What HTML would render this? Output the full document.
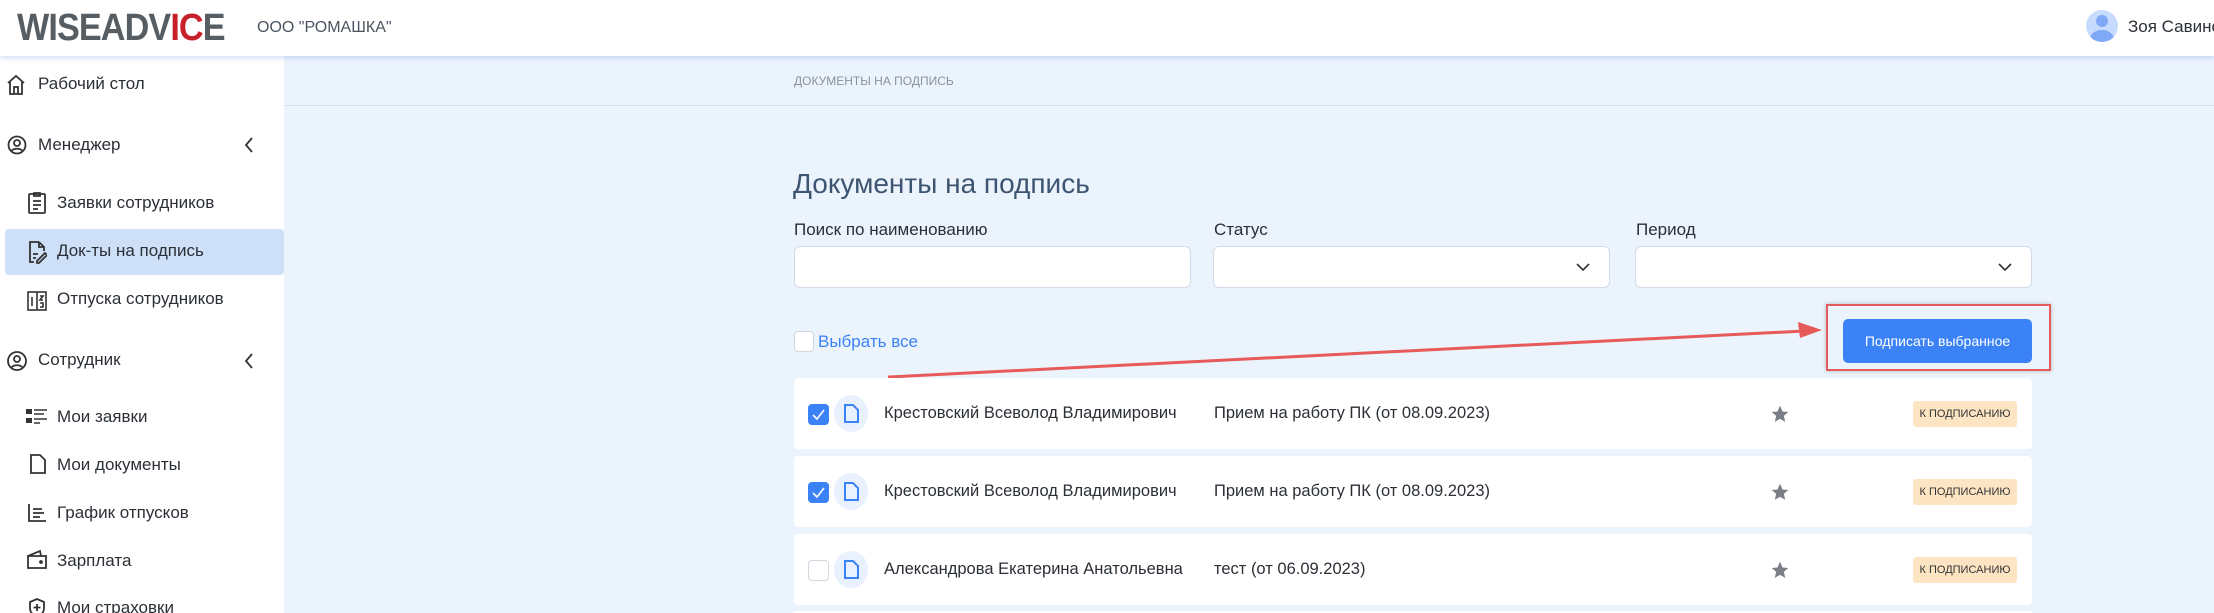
<!DOCTYPE html>
<html style="width:2214px;height:613px;overflow:hidden"><head><meta charset="utf-8"><style>
*{box-sizing:border-box;margin:0;padding:0}
body{width:2214px;height:613px;overflow:hidden;background:#ebf3fd;font-family:"Liberation Sans",sans-serif;color:#2b2f36;position:relative}
.a{position:absolute;white-space:nowrap}
#hdr{position:absolute;left:0;top:0;width:2214px;height:56px;background:#fff;box-shadow:0 2px 5px rgba(120,160,230,.35);z-index:3}
#side{position:absolute;left:0;top:56px;width:284px;height:557px;background:#fff;z-index:2}
.it{position:absolute;left:0;font-size:17px;color:#2b2f36}
.ic{position:absolute}
.inp{position:absolute;top:246px;height:42px;background:#fff;border:1px solid #d3dbe6;border-radius:6px}
.lbl{position:absolute;top:220px;font-size:17px;color:#2b2f36}
.row{position:absolute;left:794px;width:1238px;height:71px;background:#fff;border-radius:4px}
.cb{position:absolute;left:14px;top:26px;width:21px;height:21px;border-radius:4px}
.cb.on{background:#3b82f6}
.cb.off{border:1.5px solid #cfd6df;background:#fff}
.dc{position:absolute;left:40px;top:17px;width:34px;height:37px;border-radius:50%;background:#e8f1fd}
.nm{position:absolute;left:90px;top:26px;font-size:16.5px}
.dn{position:absolute;left:420px;top:26px;font-size:16.5px}
.st{position:absolute;left:976px;top:26px}
.bd{position:absolute;left:1119px;top:23px;width:104px;height:26px;background:#fde5c4;border-radius:3px;font-size:11px;text-align:center;line-height:26px;color:#333}
</style></head><body>
<div id="hdr">
 <div class="a" style="left:17px;top:7px;font-size:38px;font-weight:bold;color:#565d63;letter-spacing:-1px;transform:scaleX(.9);transform-origin:left">WISEADV<span style="color:#c8202a">I</span><span style="color:#c8202a">C</span>E</div>
 <div class="a" style="left:257px;top:19px;font-size:16px;color:#4a5561">ООО "РОМАШКА"</div>
 <div class="a" style="left:2086px;top:10px;width:32px;height:32px;border-radius:50%;background:#c6dbfd;overflow:hidden">
  <div style="position:absolute;left:10px;top:5px;width:12px;height:12px;border-radius:50%;background:#7fa9f5"></div>
  <div style="position:absolute;left:4px;top:20px;width:24px;height:18px;border-radius:50%;background:#7fa9f5"></div></div>
 <div class="a" style="left:2128px;top:17px;font-size:17px;color:#2b2f36">Зоя Савинская</div>
</div>
<div id="side">
 <div style="position:absolute;left:5px;top:173px;width:279px;height:46px;background:#cde0f7;border-radius:4px"></div>
 <svg class="ic" style="left:6px;top:18px" width="20" height="22" viewBox="0 0 20 22" fill="none" stroke="#333" stroke-width="1.8"><path d="M2 9L10 2l8 7M4 8v12h12V8M8 20v-7h4v7"/></svg>
 <div class="it" style="left:38px;top:18px">Рабочий стол</div>
 <svg class="ic" style="left:6px;top:78px" width="22" height="22" viewBox="0 0 22 22" fill="none" stroke="#333" stroke-width="1.8"><circle cx="11" cy="11" r="8.5"/><circle cx="11" cy="9" r="3"/><path d="M5.5 17c2-3 9-3 11 0"/></svg>
 <div class="it" style="left:38px;top:79px">Менеджер</div>
 <svg class="ic" style="left:243px;top:80px" width="12" height="18" viewBox="0 0 12 18" fill="none" stroke="#333" stroke-width="1.8"><path d="M9 2L3 9l6 7"/></svg>
 <svg class="ic" style="left:27px;top:135px" width="20" height="24" viewBox="0 0 20 24" fill="none" stroke="#333" stroke-width="1.8"><rect x="2" y="3" width="16" height="19" rx="1"/><path d="M7 2h6v3H7zM6 10h8M6 14h8M6 18h5"/></svg>
 <div class="it" style="left:57px;top:137px">Заявки сотрудников</div>
 <svg class="ic" style="left:27px;top:184px" width="20" height="24" viewBox="0 0 20 24" fill="none" stroke="#333" stroke-width="1.8"><path d="M12 2H3v20h4M12 2l5 5v4M12 2v5h5M6 14h5M6 18h3M10 21l8-8 2 2-8 8h-2z"/></svg>
 <div class="it" style="left:57px;top:185px">Док-ты на подпись</div>
 <svg class="ic" style="left:27px;top:234px" width="20" height="22" viewBox="0 0 20 22" fill="none" stroke="#333" stroke-width="1.6"><rect x="1" y="2" width="18" height="18"/><path d="M10 2v18M5 7v9M13 6h3l-3 4h3M13 13h3v4h-3"/></svg>
 <div class="it" style="left:57px;top:233px">Отпуска сотрудников</div>
 <svg class="ic" style="left:6px;top:294px" width="22" height="22" viewBox="0 0 22 22" fill="none" stroke="#333" stroke-width="1.8"><circle cx="11" cy="11" r="9"/><circle cx="11" cy="9" r="3"/><path d="M5.5 17.5c2-3 9-3 11 0"/></svg>
 <div class="it" style="left:38px;top:294px">Сотрудник</div>
 <svg class="ic" style="left:243px;top:296px" width="12" height="18" viewBox="0 0 12 18" fill="none" stroke="#333" stroke-width="1.8"><path d="M9 2L3 9l6 7"/></svg>
 <svg class="ic" style="left:26px;top:351px" width="24" height="20" viewBox="0 0 24 20"><rect x="0" y="2" width="6" height="5" fill="#333"/><rect x="0" y="11" width="6" height="5" fill="#333"/><path d="M8 3h13M8 7h10M8 12h13M8 16h6" stroke="#333" stroke-width="1.6"/></svg>
 <div class="it" style="left:57px;top:351px">Мои заявки</div>
 <svg class="ic" style="left:29px;top:397px" width="18" height="22" viewBox="0 0 18 22" fill="none" stroke="#333" stroke-width="1.8"><path d="M2 2h9l5 5v13H2z"/></svg>
 <div class="it" style="left:57px;top:399px">Мои документы</div>
 <svg class="ic" style="left:27px;top:447px" width="20" height="20" viewBox="0 0 20 20" fill="none" stroke="#333" stroke-width="1.8"><path d="M2 1v17h17M6 6h9M6 10h11M6 14h7"/></svg>
 <div class="it" style="left:57px;top:447px">График отпусков</div>
 <svg class="ic" style="left:26px;top:493px" width="22" height="20" viewBox="0 0 22 20" fill="none" stroke="#333" stroke-width="1.8"><path d="M2 7h18v12H2zM2 7l12-5 1 5"/><circle cx="15" cy="13" r="1" fill="#333"/></svg>
 <div class="it" style="left:57px;top:495px">Зарплата</div>
 <svg class="ic" style="left:27px;top:541px" width="20" height="22" viewBox="0 0 20 22" fill="none" stroke="#333" stroke-width="1.8"><path d="M10 2l7 3v6c0 5-4 8-7 9-3-1-7-4-7-9V5z M10 7v7M6.5 10.5h7"/></svg>
 <div class="it" style="left:57px;top:542px">Мои страховки</div>
</div>
<div style="position:absolute;left:284px;top:105px;width:1930px;height:1px;background:#d8e2ee"></div>
<div class="a" style="left:794px;top:74px;font-size:12px;color:#8a929c">ДОКУМЕНТЫ НА ПОДПИСЬ</div>
<div class="a" style="left:793px;top:168px;font-size:28px;color:#3d5570">Документы на подпись</div>
<div class="lbl" style="left:794px">Поиск по наименованию</div>
<div class="lbl" style="left:1214px">Статус</div>
<div class="lbl" style="left:1636px">Период</div>
<div class="inp" style="left:794px;width:397px"></div>
<div class="inp" style="left:1213px;width:397px"><svg style="position:absolute;right:18px;top:15px" width="16" height="10" viewBox="0 0 16 10" fill="none" stroke="#333" stroke-width="1.6"><path d="M2 2l6 6 6-6"/></svg></div>
<div class="inp" style="left:1635px;width:397px"><svg style="position:absolute;right:18px;top:15px" width="16" height="10" viewBox="0 0 16 10" fill="none" stroke="#333" stroke-width="1.6"><path d="M2 2l6 6 6-6"/></svg></div>
<div style="position:absolute;left:794px;top:331px;width:20px;height:21px;border:1.5px solid #cfd6df;border-radius:4px;background:#fff"></div>
<div class="a" style="left:818px;top:332px;font-size:17px;color:#3b82f6">Выбрать все</div>
<div style="position:absolute;left:1826px;top:304px;width:225px;height:67px;border:2px solid #e25c5c;box-shadow:0 0 4px rgba(0,0,0,.25)"></div>
<div style="position:absolute;left:1843px;top:319px;width:189px;height:44px;background:#3b82f6;border-radius:5px;color:#fff;font-size:14px;text-align:center;line-height:44px">Подписать выбранное</div>
<svg style="position:absolute;left:0;top:0" width="2214" height="613"><line x1="888" y1="377" x2="1805" y2="331" stroke="#e65a5a" stroke-width="3"/><path d="M1822 330l-24-8 2 16z" fill="#e65a5a"/></svg>
<div class="row" style="top:378px"><div class="cb on"><svg width="21" height="21" viewBox="0 0 21 21" fill="none" stroke="#fff" stroke-width="1.6"><path d="M5 11l4 4 7-9"/></svg></div><div class="dc"><svg style="position:absolute;left:10px;top:9px" width="15" height="19" viewBox="0 0 15 19" fill="none" stroke="#3b82f6" stroke-width="2"><path d="M1 1h8l5 5v12H1z"/></svg></div><div class="nm">Крестовский Всеволод Владимирович</div><div class="dn">Прием на работу ПК (от 08.09.2023)</div><svg class="st" width="20" height="20" viewBox="0 0 24 24"><path d="M12 2l3 7 7 .6-5.4 4.7 1.7 7.2L12 17.8 5.7 21.5l1.7-7.2L2 9.6 9 9z" fill="#7a7f87"/></svg><div class="bd">К ПОДПИСАНИЮ</div></div>
<div class="row" style="top:456px"><div class="cb on"><svg width="21" height="21" viewBox="0 0 21 21" fill="none" stroke="#fff" stroke-width="1.6"><path d="M5 11l4 4 7-9"/></svg></div><div class="dc"><svg style="position:absolute;left:10px;top:9px" width="15" height="19" viewBox="0 0 15 19" fill="none" stroke="#3b82f6" stroke-width="2"><path d="M1 1h8l5 5v12H1z"/></svg></div><div class="nm">Крестовский Всеволод Владимирович</div><div class="dn">Прием на работу ПК (от 08.09.2023)</div><svg class="st" width="20" height="20" viewBox="0 0 24 24"><path d="M12 2l3 7 7 .6-5.4 4.7 1.7 7.2L12 17.8 5.7 21.5l1.7-7.2L2 9.6 9 9z" fill="#7a7f87"/></svg><div class="bd">К ПОДПИСАНИЮ</div></div>
<div class="row" style="top:534px"><div class="cb off"></div><div class="dc"><svg style="position:absolute;left:10px;top:9px" width="15" height="19" viewBox="0 0 15 19" fill="none" stroke="#3b82f6" stroke-width="2"><path d="M1 1h8l5 5v12H1z"/></svg></div><div class="nm">Александрова Екатерина Анатольевна</div><div class="dn">тест (от 06.09.2023)</div><svg class="st" width="20" height="20" viewBox="0 0 24 24"><path d="M12 2l3 7 7 .6-5.4 4.7 1.7 7.2L12 17.8 5.7 21.5l1.7-7.2L2 9.6 9 9z" fill="#7a7f87"/></svg><div class="bd">К ПОДПИСАНИЮ</div></div>
<div class="row" style="top:611px;height:2px"></div>
</body></html>
